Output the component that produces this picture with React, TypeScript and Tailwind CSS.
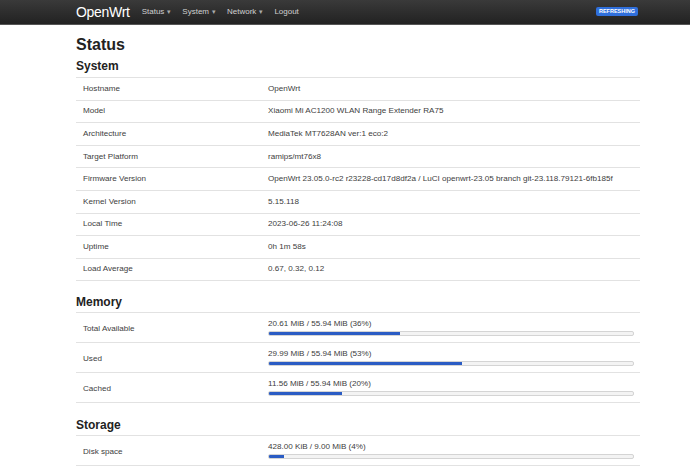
import React from "react";

const systemRows: [string, string][] = [
  ["Hostname", "OpenWrt"],
  ["Model", "Xiaomi Mi AC1200 WLAN Range Extender RA75"],
  ["Architecture", "MediaTek MT7628AN ver:1 eco:2"],
  ["Target Platform", "ramips/mt76x8"],
  ["Firmware Version", "OpenWrt 23.05.0-rc2 r23228-cd17d8df2a / LuCI openwrt-23.05 branch git-23.118.79121-6fb185f"],
  ["Kernel Version", "5.15.118"],
  ["Local Time", "2023-06-26 11:24:08"],
  ["Uptime", "0h 1m 58s"],
  ["Load Average", "0.67, 0.32, 0.12"],
];

const memoryRows: [string, string, number][] = [
  ["Total Available", "20.61 MiB / 55.94 MiB (36%)", 36],
  ["Used", "29.99 MiB / 55.94 MiB (53%)", 53],
  ["Cached", "11.56 MiB / 55.94 MiB (20%)", 20],
];

const Caret = () => <span className="ml-[3px] text-[7px] text-[#aaa]">▾</span>;

const Bar = ({ pct }: { pct: number }) => (
  <div className="mt-[2px] h-[5px] w-[366px] rounded-[2px] border border-[#d4d4d4] bg-[#f3f3f3] overflow-hidden">
    <div className="h-full bg-[#2a5cc4]" style={{ width: `${pct}%` }} />
  </div>
);

export default function App() {
  return (
    <div className="min-h-[473px] bg-white text-[#404040] font-['Liberation_Sans',Arial,sans-serif]">
      <div className="h-[25px] border-b border-[#555] bg-gradient-to-b from-[#3a3a3a] to-[#222]">
        <div className="ml-[76px] w-[564px] h-full flex items-center">
          <span className="text-white text-[14px] tracking-[-0.3px]">OpenWrt</span>
          <nav className="ml-[12px] flex items-center gap-[11px] text-[#d0d0d0] text-[8px]">
            <span>Status<Caret /></span>
            <span>System<Caret /></span>
            <span>Network<Caret /></span>
            <span>Logout</span>
          </nav>
          <span className="ml-auto mr-[2px] mt-[-1px] rounded-[2px] bg-[#2f6fdc] px-[3px] py-[1px] text-[5.5px] font-bold leading-[7px] text-white">
            REFRESHING
          </span>
        </div>
      </div>

      <div className="ml-[76px] w-[564px]">
        <h2 className="pt-[11px] text-[16px] font-bold leading-[18px] text-[#222]">Status</h2>
        <h3 className="mt-[5px] text-[12px] font-bold leading-[14px] text-[#222]">System</h3>
        <div className="mt-[4px] border-t border-[#e2e2e2]">
          {systemRows.map(([k, v]) => (
            <div key={k} className="flex h-[22.6px] items-center border-b border-[#e2e2e2] text-[8.1px]">
              <div className="w-[192px] pl-[7px]">{k}</div>
              <div className="whitespace-nowrap">{v}</div>
            </div>
          ))}
        </div>

        <h3 className="mt-[14px] text-[12px] font-bold leading-[14px] text-[#222]">Memory</h3>
        <div className="mt-[3px] border-t border-[#e2e2e2]">
          {memoryRows.map(([k, v, p]) => (
            <div key={k} className="flex h-[30px] items-center border-b border-[#e2e2e2] text-[8.1px]">
              <div className="w-[192px] pl-[7px] pt-[2px]">{k}</div>
              <div>
                <div className="leading-[10px]">{v}</div>
                <Bar pct={p} />
              </div>
            </div>
          ))}
        </div>

        <h3 className="mt-[15px] text-[12px] font-bold leading-[14px] text-[#222]">Storage</h3>
        <div className="mt-[3px] border-t border-[#e2e2e2]">
          <div className="flex h-[30px] items-center border-b border-[#e2e2e2] text-[8.1px]">
            <div className="w-[192px] pl-[7px] pt-[2px]">Disk space</div>
            <div>
              <div className="leading-[10px]">428.00 KiB / 9.00 MiB (4%)</div>
              <Bar pct={4} />
            </div>
          </div>
        </div>
      </div>
    </div>
  );
}
